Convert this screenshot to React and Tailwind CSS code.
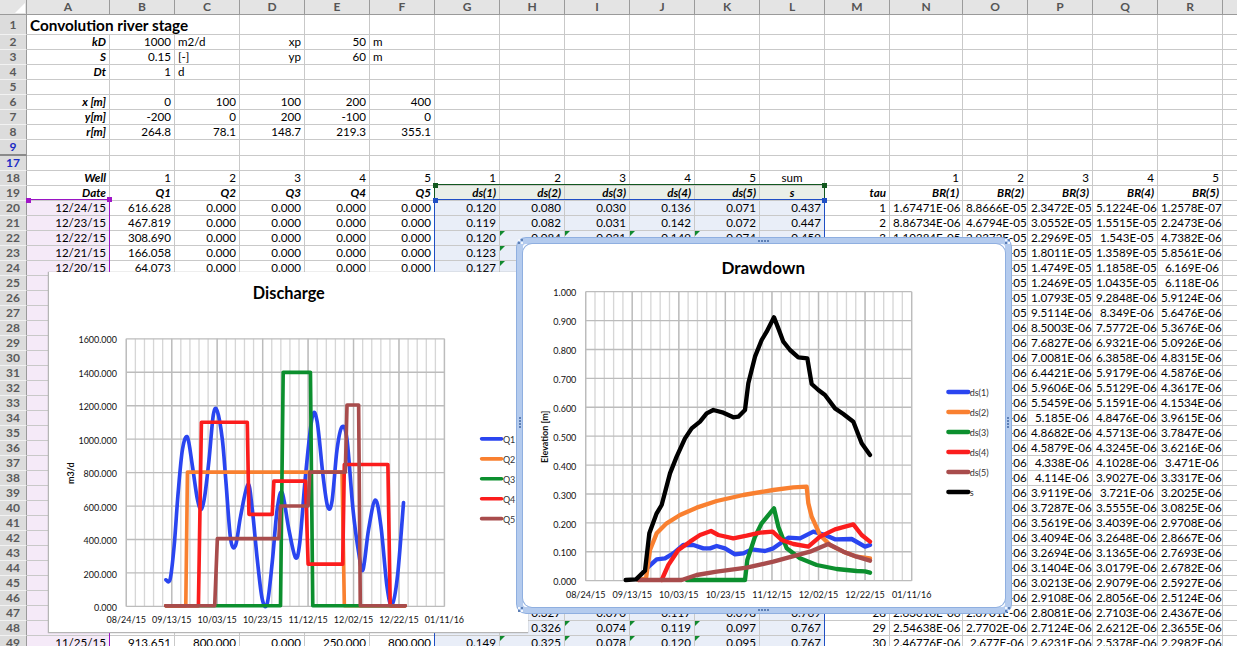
import React from "react";

const columns = ["A", "B", "C", "D", "E", "F", "G", "H", "I", "J", "K", "L", "M", "N", "O", "P", "Q", "R", "S"];
const widths = {
  A: "w-[83px]", B: "w-[65px]", C: "w-[65px]", D: "w-[65px]", E: "w-[65px]", F: "w-[65px]", G: "w-[65px]",
  H: "w-[65px]", I: "w-[65px]", J: "w-[65px]", K: "w-[65px]", L: "w-[65px]", M: "w-[65px]", N: "w-[73px]",
  O: "w-[65px]", P: "w-[65px]", Q: "w-[65px]", R: "w-[65px]", S: "w-[15px]",
};

const fill = (row, from, values) => {
  const out = { ...row };
  values.forEach((v, i) => {
    out[columns[columns.indexOf(from) + i]] = v;
  });
  return out;
};

const sheet = {
  1: { A: "Convolution river stage" },
  2: { A: "kD", B: "1000", C: "m2/d", D: "xp", E: "50", F: "m" },
  3: { A: "S", B: "0.15", C: "[-]", D: "yp", E: "60", F: "m" },
  4: { A: "Dt", B: "1", C: "d" },
  5: {},
  6: fill({}, "A", ["x [m]", "0", "100", "100", "200", "400"]),
  7: fill({}, "A", ["y[m]", "-200", "0", "200", "-100", "0"]),
  8: fill({}, "A", ["r[m]", "264.8", "78.1", "148.7", "219.3", "355.1"]),
  9: {},
  17: {},
  18: fill({}, "A", ["Well", "1", "2", "3", "4", "5", "1", "2", "3", "4", "5", "sum", "", "1", "2", "3", "4", "5"]),
  19: fill({}, "A", ["Date", "Q1", "Q2", "Q3", "Q4", "Q5", "ds(1)", "ds(2)", "ds(3)", "ds(4)", "ds(5)", "s", "tau", "BR(1)", "BR(2)", "BR(3)", "BR(4)", "BR(5)"]),
  20: fill({}, "A", ["12/24/15", "616.628", "0.000", "0.000", "0.000", "0.000", "0.120", "0.080", "0.030", "0.136", "0.071", "0.437", "1", "1.67471E-06", "8.8666E-05", "2.3472E-05", "5.1224E-06", "1.2578E-07"]),
  21: fill({}, "A", ["12/23/15", "467.819", "0.000", "0.000", "0.000", "0.000", "0.119", "0.082", "0.031", "0.142", "0.072", "0.447", "2", "8.86734E-06", "4.6794E-05", "3.0552E-05", "1.5515E-05", "2.2473E-06"]),
  22: fill({}, "A", ["12/22/15", "308.690", "0.000", "0.000", "0.000", "0.000", "0.120", "0.084", "0.031", "0.149", "0.074", "0.459", "3", "1.10384E-05", "2.9372E-05", "2.2969E-05", "1.543E-05", "4.7382E-06"]),
  23: fill({}, "A", ["12/21/15", "166.058", "0.000", "0.000", "0.000", "0.000", "0.123"]),
  24: fill({}, "A", ["12/20/15", "64.073", "0.000", "0.000", "0.000", "0.000", "0.127"]),
  47: fill({}, "H", ["0.327", "0.070", "0.117", "0.098", "0.769", "28", "2.63016E-06", "2.8701E-06"]),
  48: fill({}, "H", ["0.326", "0.074", "0.119", "0.097", "0.767", "29", "2.54638E-06", "2.7702E-06"]),
  49: fill({}, "A", ["11/25/15", "913.651", "800.000", "0.000", "250.000", "800.000", "0.149", "0.325", "0.078", "0.120", "0.095", "0.767", "30", "2.46776E-06", "2.677E-06"]),
};

const tail = [
  [23, "2.1182E-05", "1.8011E-05", "1.3589E-05", "5.8561E-06"],
  [24, "1.6503E-05", "1.4749E-05", "1.1858E-05", "6.169E-06"],
  [25, "1.3398E-05", "1.2469E-05", "1.0435E-05", "6.118E-06"],
  [26, "1.1302E-05", "1.0793E-05", "9.2848E-06", "5.9124E-06"],
  [27, "1.0006E-05", "9.5114E-06", "8.349E-06", "5.6476E-06"],
  [28, "8.9412E-06", "8.5003E-06", "7.5772E-06", "5.3676E-06"],
  [29, "8.0311E-06", "7.6827E-06", "6.9321E-06", "5.0926E-06"],
  [30, "7.2884E-06", "7.0081E-06", "6.3858E-06", "4.8315E-06"],
  [31, "6.6641E-06", "6.4421E-06", "5.9179E-06", "4.5876E-06"],
  [32, "6.1402E-06", "5.9606E-06", "5.5129E-06", "4.3617E-06"],
  [33, "5.6883E-06", "5.5459E-06", "5.1591E-06", "4.1534E-06"],
  [34, "5.2971E-06", "5.185E-06", "4.8476E-06", "3.9615E-06"],
  [35, "4.9556E-06", "4.8682E-06", "4.5713E-06", "3.7847E-06"],
  [36, "4.6543E-06", "4.5879E-06", "4.3245E-06", "3.6216E-06"],
  [37, "4.3864E-06", "4.338E-06", "4.1028E-06", "3.471E-06"],
  [38, "4.1466E-06", "4.114E-06", "3.9027E-06", "3.3317E-06"],
  [39, "3.9302E-06", "3.9119E-06", "3.721E-06", "3.2025E-06"],
  [40, "3.7351E-06", "3.7287E-06", "3.5555E-06", "3.0825E-06"],
  [41, "3.5577E-06", "3.5619E-06", "3.4039E-06", "2.9708E-06"],
  [42, "3.3958E-06", "3.4094E-06", "3.2648E-06", "2.8667E-06"],
  [43, "3.2474E-06", "3.2694E-06", "3.1365E-06", "2.7693E-06"],
  [44, "3.1108E-06", "3.1404E-06", "3.0179E-06", "2.6782E-06"],
  [45, "3.0903E-06", "3.0213E-06", "2.9079E-06", "2.5927E-06"],
  [46, "2.9761E-06", "2.9108E-06", "2.8056E-06", "2.5124E-06"],
  [47, null, "2.8081E-06", "2.7103E-06", "2.4367E-06"],
  [48, null, "2.7124E-06", "2.6212E-06", "2.3655E-06"],
  [49, null, "2.6231E-06", "2.5378E-06", "2.2982E-06"],
];
tail.forEach(([r, o, p, q, rr]) => {
  sheet[r] = { ...(sheet[r] || {}), P: p, Q: q, R: rr };
  if (o) sheet[r].O = o;
});

const rowNumbers = [1, 2, 3, 4, 5, 6, 7, 8, 9, 17, 18, 19];
for (let i = 20; i <= 49; i++) {
  rowNumbers.push(i);
  sheet[i] = sheet[i] || {};
}

const flagged = ["H22", "I22", "J22", "K22", "H23", "H24", "I47", "J47", "K47", "I48", "J48", "K48", "H49", "I49", "J49", "K49"];
const leftAligned = ["C2", "C3", "C4", "F2", "F3"];
const centered = ["L18", "L19"];
const rangeBlue = ["G", "H", "I", "J", "K", "L"];

function Cell({ col, row }) {
  const id = col + row;
  const value = sheet[row][col] || "";
  const boldItalic = row === 19 || (col === "A" && row > 1 && row <= 18);
  let bg = "";
  if (col === "A" && row >= 20) bg = "bg-[#f5eaf8]";
  if (rangeBlue.includes(col) && row >= 20) bg = "bg-[#e9eef8]";
  if (rangeBlue.includes(col) && row === 19) bg = "bg-[#e9efe8]";
  let align = "text-right";
  if (leftAligned.includes(id)) align = "text-left";
  if (centered.includes(id)) align = "text-center";
  return (
    <td
      className={`relative h-[15px] overflow-hidden whitespace-nowrap border-r border-b border-[#c9c9c9] px-[3px] py-0 ${bg} ${align} ${
        boldItalic ? "font-bold italic" : ""
      }`}
    >
      {flagged.includes(id) && (
        <span className="absolute top-0 left-0 h-0 w-0 border-t-[5px] border-r-[5px] border-t-[#118a2e] border-r-transparent" />
      )}
      {value}
    </td>
  );
}

function Sheet() {
  return (
    <table className="w-[1237px] table-fixed border-separate border-spacing-0 text-[11.6px] leading-[14px] text-black">
      <colgroup>
        <col className="w-[27px]" />
        {columns.map((c) => (
          <col key={c} className={widths[c]} />
        ))}
      </colgroup>
      <thead>
        <tr>
          <th className="relative h-[15px] border-r border-b border-[#9a9a9a] bg-[#e4e4e4] p-0">
            <span className="absolute right-[1px] bottom-[1px] h-0 w-0 border-b-[10px] border-l-[10px] border-b-white border-l-transparent" />
          </th>
          {columns.map((c) => (
            <th
              key={c}
              className="h-[15px] border-r border-b border-[#9a9a9a] bg-[#e4e4e4] p-0 text-center text-[12px] font-bold text-[#555555]"
            >
              {c === "S" ? "" : c}
            </th>
          ))}
        </tr>
      </thead>
      <tbody>
        {rowNumbers.map((row) => (
          <tr key={row}>
            <th
              className={`p-0 text-center text-[12px] font-bold border-r border-[#9a9a9a] bg-[#dcdcdc] ${
                row === 1 ? "h-[20px]" : "h-[15px]"
              } ${row === 9 ? "border-b-2 border-b-[#8a8a8a]" : "border-b border-b-[#f2f2f2]"} ${
                row === 9 || row === 17 ? "text-[#1a2bc4]" : "text-[#5a5a5a]"
              }`}
            >
              {row}
            </th>
            {row === 1 ? (
              <>
                <td
                  colSpan={3}
                  className="h-[20px] border-r border-b border-[#c9c9c9] px-[3px] py-0 text-[15.3px] font-bold whitespace-nowrap"
                >
                  {sheet[1].A}
                </td>
                {columns.slice(3).map((c) => (
                  <Cell key={c} col={c} row={row} />
                ))}
              </>
            ) : (
              columns.map((c) => <Cell key={c} col={c} row={row} />)
            )}
          </tr>
        ))}
      </tbody>
    </table>
  );
}

// catmull-rom through the picked points, the excel "smoothed line"
function smooth(pts) {
  let d = `M${pts[0][0]} ${pts[0][1]}`;
  for (let i = 0; i < pts.length - 1; i++) {
    const p0 = pts[i - 1] || pts[i];
    const p1 = pts[i];
    const p2 = pts[i + 1];
    const p3 = pts[i + 2] || p2;
    const c1 = [p1[0] + (p2[0] - p0[0]) / 6, p1[1] + (p2[1] - p0[1]) / 6];
    const c2 = [p2[0] - (p3[0] - p1[0]) / 6, p2[1] - (p3[1] - p1[1]) / 6];
    d += ` C${c1[0]} ${c1[1]} ${c2[0]} ${c2[1]} ${p2[0]} ${p2[1]}`;
  }
  return d;
}

const straight = (pts) => "M" + pts.map((p) => p.join(" ")).join(" L");

const xDates = ["08/24/15", "09/13/15", "10/03/15", "10/23/15", "11/12/15", "12/02/15", "12/22/15", "01/11/16"];

function Chart({ box, plot, title, titleX, titleY, titleSize, yLabels, yTitle, yTitleX, xLabelY, legend, series, legendX, minorStep, lineWidth }) {
  const [left, top, right, bottom] = plot;
  const majorStep = (right - left) / 7;
  const minors = [];
  for (let x = left; x <= right + 1; x += minorStep) minors.push(x);
  const rowStep = (bottom - top) / (yLabels.length - 1);
  return (
    <svg viewBox={box} className="block h-full w-full">
      <text x={titleX} y={titleY} textAnchor="middle" fontSize={titleSize} fontWeight="700" fill="#000">
        {title}
      </text>
      <rect x={left} y={top} width={right - left} height={bottom - top} fill="#fff" />
      {minors.map((x) => (
        <line key={x} x1={x} x2={x} y1={top} y2={bottom} stroke="#d6d6d6" strokeWidth="4" />
      ))}
      {xDates.map((d, i) => (
        <line key={d} x1={left + i * majorStep} x2={left + i * majorStep} y1={top} y2={bottom} stroke="#bcbcbc" strokeWidth="4" />
      ))}
      {yLabels.map((l, i) => (
        <g key={l}>
          <line x1={left} x2={right} y1={top + i * rowStep} y2={top + i * rowStep} stroke="#bcbcbc" strokeWidth="4" />
          <text x={left - 28} y={top + i * rowStep + 14} textAnchor="end" fontSize="27" fill="#111">
            {l}
          </text>
        </g>
      ))}
      {xDates.map((d, i) => (
        <text key={d} x={left + i * majorStep} y={xLabelY} textAnchor="middle" fontSize="27" fill="#111">
          {d}
        </text>
      ))}
      <text
        transform={`translate(${yTitleX} ${(top + bottom) / 2 + 2}) rotate(-90)`}
        textAnchor="middle"
        fontSize="27"
        fontWeight="700"
        fill="#111"
      >
        {yTitle}
      </text>
      {series.map((s) => (
        <path
          key={s.name}
          d={s.curve ? smooth(s.pts) : straight(s.pts)}
          fill="none"
          stroke={s.color}
          strokeWidth={lineWidth}
          strokeLinejoin="round"
          strokeLinecap="round"
        />
      ))}
      {series.map((s, i) => (
        <g key={s.name}>
          <line
            x1={legendX}
            x2={legendX + 60}
            y1={legend + i * 60}
            y2={legend + i * 60}
            stroke={s.color}
            strokeWidth={lineWidth}
            strokeLinecap="round"
          />
          <text x={legendX + 64} y={legend + i * 60 + 13} fontSize="27" fill="#333">
            {s.name}
          </text>
        </g>
      ))}
    </svg>
  );
}

const discharge = [
  {
    name: "Q1",
    color: "#2a45f0",
    curve: true,
    pts: [[375, 932], [388, 930], [400, 830], [412, 670], [425, 540], [440, 503], [455, 590], [470, 690], [482, 720], [492, 680], [505, 570], [518, 435], [530, 425], [545, 510], [556, 640], [570, 810], [585, 828], [600, 740], [622, 645], [635, 720], [650, 870], [665, 990], [680, 1003], [695, 880], [710, 720], [725, 670], [745, 780], [765, 865], [778, 820], [795, 620], [815, 445], [830, 455], [848, 620], [862, 712], [875, 695], [890, 540], [905, 472], [920, 510], [938, 720], [955, 850], [968, 902], [985, 780], [1005, 692], [1022, 770], [1040, 950], [1055, 1008], [1072, 920], [1090, 700]],
  },
  { name: "Q2", color: "#f98030", pts: [[375, 1010], [435, 1010], [440, 608], [905, 608], [912, 1010], [1095, 1010]] },
  { name: "Q3", color: "#0c8f2e", pts: [[375, 1010], [720, 1010], [728, 308], [810, 308], [817, 1010], [1095, 1010]] },
  { name: "Q4", color: "#fb1d1d", pts: [[375, 1010], [473, 1010], [482, 458], [620, 458], [625, 735], [695, 735], [700, 635], [795, 635], [803, 885], [907, 885], [912, 585], [1043, 585], [1050, 1010], [1095, 1010]] },
  { name: "Q5", color: "#a84c4c", pts: [[375, 1010], [522, 1010], [530, 808], [715, 808], [720, 710], [803, 710], [808, 608], [915, 608], [920, 406], [955, 406], [960, 1010], [1095, 1010]] },
];

const drawdown = [
  {
    name: "ds(1)",
    color: "#2a45f0",
    pts: [[410, 985], [440, 958], [465, 955], [490, 940], [520, 915], [550, 915], [580, 925], [600, 925], [620, 918], [645, 925], [675, 943], [700, 940], [725, 928], [765, 933], [790, 925], [835, 893], [870, 895], [910, 875], [945, 885], [975, 898], [1025, 897], [1065, 920], [1080, 915]],
  },
  {
    name: "ds(2)",
    color: "#f98030",
    pts: [[385, 1020], [408, 1015], [420, 930], [440, 880], [470, 850], [510, 825], [560, 803], [620, 783], [700, 765], [790, 750], [850, 742], [890, 740], [895, 790], [905, 830], [930, 885], [960, 915], [1000, 935], [1040, 950], [1080, 955]],
  },
  {
    name: "ds(3)",
    color: "#0c8f2e",
    pts: [[530, 1020], [705, 1020], [712, 960], [735, 890], [755, 850], [792, 805], [805, 860], [830, 925], [870, 955], [920, 975], [980, 987], [1040, 993], [1065, 994], [1080, 998]],
  },
  {
    name: "ds(4)",
    color: "#fb1d1d",
    pts: [[455, 1020], [475, 975], [505, 930], [540, 905], [570, 885], [603, 873], [625, 885], [670, 895], [710, 887], [750, 878], [788, 875], [815, 900], [850, 912], [895, 920], [930, 890], [975, 868], [1030, 853], [1055, 885], [1080, 905]],
  },
  {
    name: "ds(5)",
    color: "#a84c4c",
    pts: [[385, 1020], [515, 1020], [560, 1005], [620, 995], [710, 983], [790, 965], [900, 935], [955, 912], [1000, 935], [1040, 950], [1080, 962]],
  },
  {
    name: "s",
    color: "#000000",
    pts: [[347, 1020], [378, 1018], [405, 992], [418, 880], [440, 820], [455, 795], [480, 700], [500, 650], [525, 595], [545, 565], [570, 545], [590, 520], [610, 510], [640, 518], [670, 532], [685, 530], [705, 510], [715, 430], [735, 350], [755, 300], [770, 275], [792, 232], [805, 265], [820, 305], [840, 330], [865, 352], [892, 355], [905, 432], [925, 450], [945, 465], [975, 505], [1000, 522], [1030, 545], [1055, 610], [1080, 645]],
  },
];

function Handle({ className }) {
  return (
    <span className={`absolute grid grid-cols-2 gap-[1px] ${className}`}>
      <i className="h-[2px] w-[2px] bg-[#f4f7fc]" />
      <i className="h-[2px] w-[2px] bg-[#5d7fb5]" />
      <i className="h-[2px] w-[2px] bg-[#5d7fb5]" />
      <i className="h-[2px] w-[2px] bg-[#f4f7fc]" />
    </span>
  );
}

function DotsRow({ className }) {
  return (
    <span className={`absolute flex gap-[1px] ${className}`}>
      {[0, 1, 2, 3].map((i) => (
        <i key={i} className="h-[2px] w-[2px] bg-[#5d7fb5]" />
      ))}
    </span>
  );
}

function DotsCol({ className }) {
  return (
    <span className={`absolute flex flex-col gap-[1px] ${className}`}>
      {[0, 1, 2, 3].map((i) => (
        <i key={i} className="h-[2px] w-[2px] bg-[#5d7fb5]" />
      ))}
    </span>
  );
}

export default function App() {
  return (
    <div className="relative h-[646px] w-[1237px] overflow-hidden bg-white [font-family:Lato,sans-serif]">
      <Sheet />

      {/* range outlines on top of the cells */}
      <div className="absolute top-[199px] left-[27px] h-[447px] w-[83px] border-t border-r border-[#9a14c4]" />
      <div className="absolute top-[184px] left-[434px] h-[15px] w-[391px] border-x border-t border-[#12581f]" />
      <div className="absolute top-[199px] left-[434px] h-[447px] w-[391px] border-x border-t border-[#1f4fc4]" />
      <span className="absolute top-[198px] left-[26px] h-[5px] w-[5px] bg-[#a014c8]" />
      <span className="absolute top-[197px] left-[107px] h-[5px] w-[5px] bg-[#a014c8]" />
      <span className="absolute top-[183px] left-[433px] h-[5px] w-[5px] bg-[#12581f]" />
      <span className="absolute top-[183px] left-[822px] h-[5px] w-[5px] bg-[#12581f]" />
      <span className="absolute top-[198px] left-[433px] h-[5px] w-[5px] bg-[#1f4fc4]" />
      <span className="absolute top-[198px] left-[822px] h-[5px] w-[5px] bg-[#1f4fc4]" />

      <div className="absolute top-[272px] left-[48px] h-[361px] w-[480px] border-b border-l border-[#b5b5b5] bg-white shadow-[0_0_1px_#999]">
        <Chart
          box="24 6 1440 1083"
          plot={[256, 207, 1213, 1012]}
          title="Discharge"
          titleX={745}
          titleY={88}
          titleSize={49}
          yLabels={["1600.000", "1400.000", "1200.000", "1000.000", "800.000", "600.000", "400.000", "200.000", "0.000"]}
          yTitle="m3/d"
          yTitleX={99}
          xLabelY={1061}
          legend={508}
          legendX={1325}
          minorStep={27.35}
          lineWidth={11}
          series={discharge}
        />
      </div>

      <div className="absolute top-[238px] left-[517px] h-[375px] w-[494px] rounded-[9px] border-[6px] border-[#b4cbee] bg-white shadow-[0_0_0_1px_#8fafe0]">
        <div className="h-full w-full overflow-hidden rounded-[9px] shadow-[0_0_0_1px_#8fafe0]">
          <Chart
            box="39 12 1446 1089"
            plot={[227, 155, 1205, 1022]}
            title="Drawdown"
            titleX={760}
            titleY={101}
            titleSize={51}
            yLabels={["1.000", "0.900", "0.800", "0.700", "0.600", "0.500", "0.400", "0.300", "0.200", "0.100", "0.000"]}
            yTitle="Elevation [m]"
            yTitleX={113}
            xLabelY={1074}
            legend={456}
            legendX={1315}
            minorStep={27.94}
            lineWidth={13}
            series={drawdown}
          />
        </div>
        <Handle className="-top-[5px] -left-[5px]" />
        <Handle className="-top-[5px] -right-[5px]" />
        <Handle className="-bottom-[5px] -left-[5px]" />
        <Handle className="-right-[5px] -bottom-[5px]" />
        <DotsRow className="-top-[4px] left-[235px]" />
        <DotsRow className="-bottom-[4px] left-[235px]" />
        <DotsCol className="top-[173px] -left-[4px]" />
        <DotsCol className="top-[173px] -right-[4px]" />
      </div>
    </div>
  );
}
